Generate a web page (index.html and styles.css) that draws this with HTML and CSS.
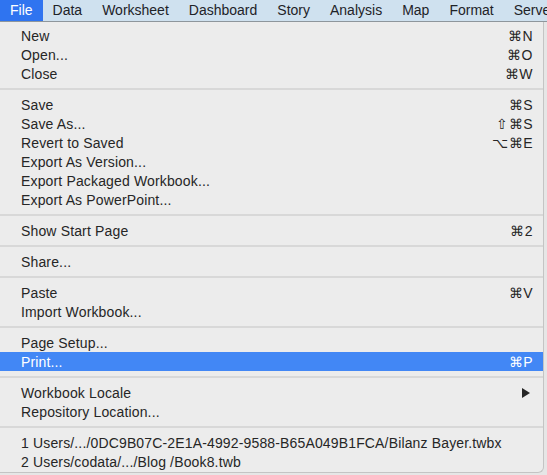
FILE: index.html
```html
<!DOCTYPE html>
<html>
<head>
<meta charset="utf-8">
<link rel="stylesheet" href="styles.css">
</head>
<body>
<div class="screen">
  <nav class="menubar">
    <span class="mb-item active">File</span>
    <span class="mb-item">Data</span>
    <span class="mb-item">Worksheet</span>
    <span class="mb-item">Dashboard</span>
    <span class="mb-item">Story</span>
    <span class="mb-item">Analysis</span>
    <span class="mb-item">Map</span>
    <span class="mb-item">Format</span>
    <span class="mb-item last">Serve</span>
  </nav>
  <div class="menu">
    <div class="row"><span>New</span><span class="sc">⌘N</span></div>
    <div class="row"><span>Open...</span><span class="sc">⌘O</span></div>
    <div class="row"><span>Close</span><span class="sc">⌘W</span></div>
    <div class="sep"></div>
    <div class="row"><span>Save</span><span class="sc">⌘S</span></div>
    <div class="row"><span>Save As...</span><span class="sc">⇧⌘S</span></div>
    <div class="row"><span>Revert to Saved</span><span class="sc">⌥⌘E</span></div>
    <div class="row"><span>Export As Version...</span></div>
    <div class="row"><span>Export Packaged Workbook...</span></div>
    <div class="row"><span>Export As PowerPoint...</span></div>
    <div class="sep"></div>
    <div class="row"><span>Show Start Page</span><span class="sc">⌘2</span></div>
    <div class="sep"></div>
    <div class="row"><span>Share...</span></div>
    <div class="sep"></div>
    <div class="row"><span>Paste</span><span class="sc">⌘V</span></div>
    <div class="row"><span>Import Workbook...</span></div>
    <div class="sep"></div>
    <div class="row"><span>Page Setup...</span></div>
    <div class="row selected"><span>Print...</span><span class="sc">⌘P</span></div>
    <div class="sep"></div>
    <div class="row"><span>Workbook Locale</span><span class="arrow"></span></div>
    <div class="row"><span>Repository Location...</span></div>
    <div class="sep"></div>
    <div class="row"><span>1 Users/.../0DC9B07C-2E1A-4992-9588-B65A049B1FCA/Bilanz Bayer.twbx</span></div>
    <div class="row"><span>2 Users/codata/.../Blog /Book8.twb</span></div>
  </div>
</div>
</body>
</html>
```
FILE: styles.css
```css
html, body {
  margin: 0;
  padding: 0;
}
body {
  width: 547px;
  height: 475px;
  overflow: hidden;
  background: #e6e6e6;
  font-family: "Liberation Sans", Arial, sans-serif;
  font-size: 14px;
  color: #262626;
}
.screen {
  width: 547px;
  height: 475px;
  display: flex;
  flex-direction: column;
}
.menubar {
  height: 21px;
  background: #cfe1ef;
  border-bottom: 1px solid #8e969c;
  display: flex;
  align-items: stretch;
  white-space: nowrap;
  overflow: hidden;
}
.mb-item {
  display: flex;
  align-items: center;
  padding: 0 10px;
  color: #1e2328;
  line-height: 21px;
  flex-shrink: 0;
}
.mb-item.last {
  padding-right: 0;
  flex-shrink: 1;
  min-width: 0;
  overflow: hidden;
}
.mb-item.active {
  background: #2f74f0;
  color: #ffffff;
}
.menu {
  width: 544px;
  height: 451px;
  box-sizing: border-box;
  background: #ececec;
  border-right: 1px solid #c4c4c4;
  border-bottom: 1px solid #c4c4c4;
  border-bottom-right-radius: 6px;
  padding-top: 4px;
  display: flex;
  flex-direction: column;
}
.row {
  height: 19px;
  display: flex;
  align-items: center;
  justify-content: space-between;
  padding: 0 10px 0 21px;
  white-space: nowrap;
  color: #262626;
  letter-spacing: 0.15px;
}
.row.selected {
  background: #4287f5;
  color: #ffffff;
}
.sc {
  letter-spacing: 0.5px;
}
.arrow {
  width: 0;
  height: 0;
  border-top: 5px solid transparent;
  border-bottom: 5px solid transparent;
  border-left: 8px solid #262626;
  margin-right: 3px;
}
.sep {
  height: 12px;
  display: flex;
  align-items: center;
}
.sep::before {
  content: "";
  flex: 1;
  height: 2px;
  background: #d8d8d8;
}
```
